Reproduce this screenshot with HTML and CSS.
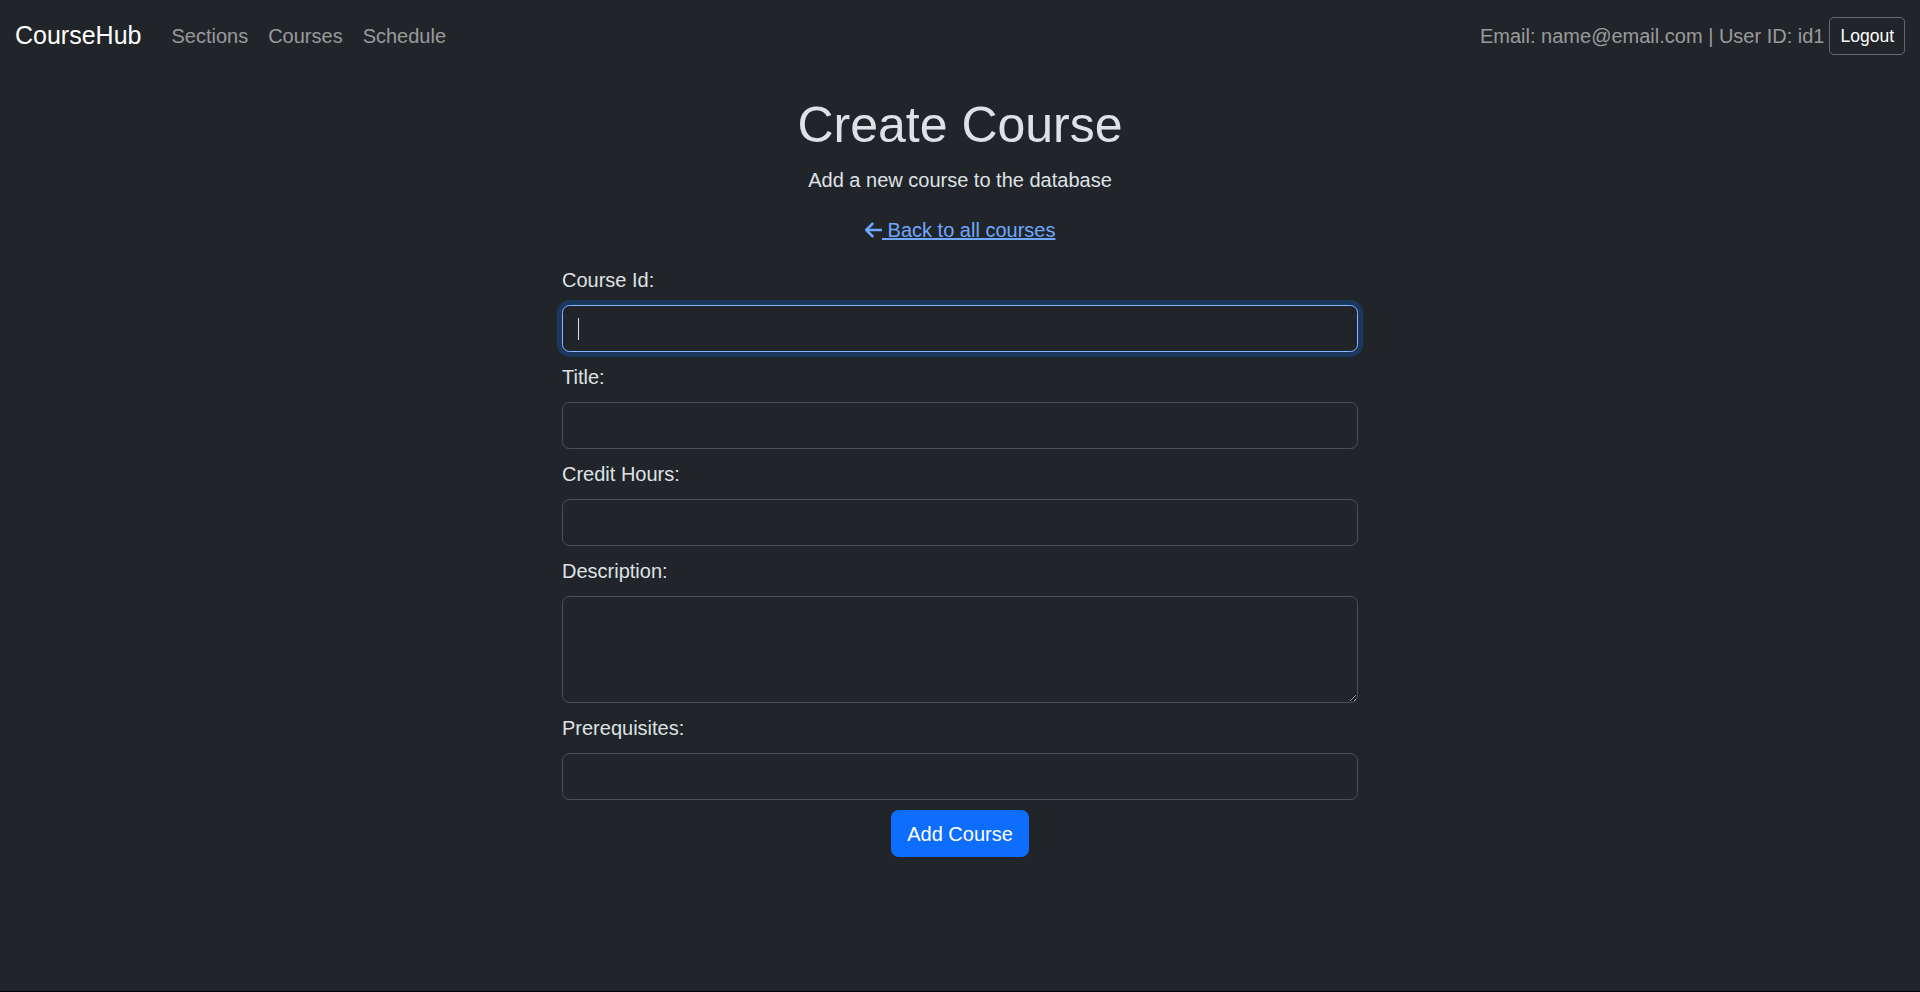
FILE: index.html
```html
<!DOCTYPE html>
<html lang="en">
<head>
<meta charset="utf-8">
<title>Create Course - CourseHub</title>
<link rel="stylesheet" href="styles.css">
</head>
<body>
<nav class="navbar">
  <div class="nav-inner">
    <a class="brand" href="#">CourseHub</a>
    <ul class="nav-links">
      <li><a href="#">Sections</a></li>
      <li><a href="#">Courses</a></li>
      <li><a href="#">Schedule</a></li>
    </ul>
    <div class="nav-right">
      <span class="user-info">Email: name@email.com | User ID: id1</span>
      <button class="btn-logout" type="button">Logout</button>
    </div>
  </div>
</nav>
<main class="page">
  <h1 class="title">Create Course</h1>
  <p class="subtitle">Add a new course to the database</p>
  <p class="back"><a href="#"><svg class="arrow" viewBox="0 0 448 512" aria-hidden="true"><path d="M9.4 233.4c-12.5 12.5-12.5 32.8 0 45.3l160 160c12.5 12.5 32.8 12.5 45.3 0s12.5-32.8 0-45.3L109.2 288 416 288c17.700 0 32-14.3 32-32s-14.3-32-32-32l-306.7 0L214.6 118.6c12.5-12.5 12.5-32.8 0-45.3s-32.8-12.5-45.3 0l-160 160z"/></svg> Back to all courses</a></p>
  <form class="course-form">
    <label class="field-label" for="courseId">Course Id:</label>
    <div class="field-wrap">
      <input class="control focused" id="courseId" type="text">
      <span class="caret"></span>
    </div>
    <label class="field-label" for="title">Title:</label>
    <input class="control" id="title" type="text">
    <label class="field-label" for="credits">Credit Hours:</label>
    <input class="control" id="credits" type="text">
    <label class="field-label" for="desc">Description:</label>
    <textarea class="control area" id="desc" rows="3"></textarea>
    <label class="field-label" for="prereq">Prerequisites:</label>
    <input class="control" id="prereq" type="text">
    <div class="actions">
      <button class="btn-primary" type="submit">Add Course</button>
    </div>
  </form>
</main>
</body>
</html>
```
FILE: styles.css
```css
html {
  background: #000;
  font-size: 20px;
}
body {
  margin: 0;
  min-height: 991px;
  background: #212529;
  color: #dee2e6;
  font-family: "Liberation Sans", Arial, sans-serif;
  font-size: 20px;
  line-height: 1.5;
}
a { color: #6ea8fe; }

.navbar {
  padding: 11px 0 9px;
}
.nav-inner {
  display: flex;
  align-items: center;
  padding: 0 15px;
}
.brand {
  font-size: 25px;
  line-height: 37.5px;
  padding: 6.25px 0;
  margin-right: 20px;
  color: #fff;
  text-decoration: none;
}
.nav-links {
  display: flex;
  list-style: none;
  margin: 0;
  padding: 0;
}
.nav-links a {
  display: block;
  padding: 10px;
  line-height: 30px;
  color: rgba(255, 255, 255, 0.55);
  text-decoration: none;
}
.nav-right {
  margin-left: auto;
  display: flex;
  align-items: center;
}
.user-info {
  color: rgba(255, 255, 255, 0.55);
  margin-right: 5px;
}
.btn-logout {
  font-family: inherit;
  font-size: 17.5px;
  line-height: 26px;
  padding: 5px 10px;
  color: #fff;
  background: transparent;
  border: 1px solid #64696e;
  border-radius: 5px;
}

.page {
  padding-top: 25px;
  display: flex;
  flex-direction: column;
  align-items: center;
}
.title {
  margin: 0 0 10px;
  font-size: 50px;
  font-weight: 500;
  line-height: 60px;
}
.subtitle {
  margin: 0 0 20px;
}
.back {
  margin: 0 0 20px;
}
.arrow {
  width: 17.5px;
  height: 20px;
  fill: currentColor;
  vertical-align: -3px;
}

.course-form {
  width: 796px;
  display: flex;
  flex-direction: column;
}
.field-label {
  margin-bottom: 10px;
}
.field-wrap {
  position: relative;
  margin-bottom: 10px;
}
.control {
  display: block;
  box-sizing: border-box;
  width: 100%;
  height: 47px;
  margin: 0 0 10px;
  padding: 7.5px 15px;
  font-family: inherit;
  font-size: 20px;
  line-height: 30px;
  color: #dee2e6;
  background: #212529;
  border: 1px solid #495057;
  border-radius: 7.5px;
}
.field-wrap .control {
  margin-bottom: 0;
}
.control.focused {
  border-color: #86b7fe;
  box-shadow: 0 0 0 5px rgba(13, 110, 253, 0.25);
  outline: 0;
  caret-color: transparent;
}
.caret {
  position: absolute;
  left: 16px;
  top: 13px;
  width: 1px;
  height: 22px;
  background: #dee2e6;
}
.control.area {
  height: 107px;
  resize: vertical;
}
.actions {
  display: flex;
  justify-content: center;
}
.btn-primary {
  font-family: inherit;
  font-size: 20px;
  line-height: 30px;
  padding: 7.5px 15px;
  color: #fff;
  background: #0d6efd;
  border: 1px solid #0d6efd;
  border-radius: 7.5px;
}
```
